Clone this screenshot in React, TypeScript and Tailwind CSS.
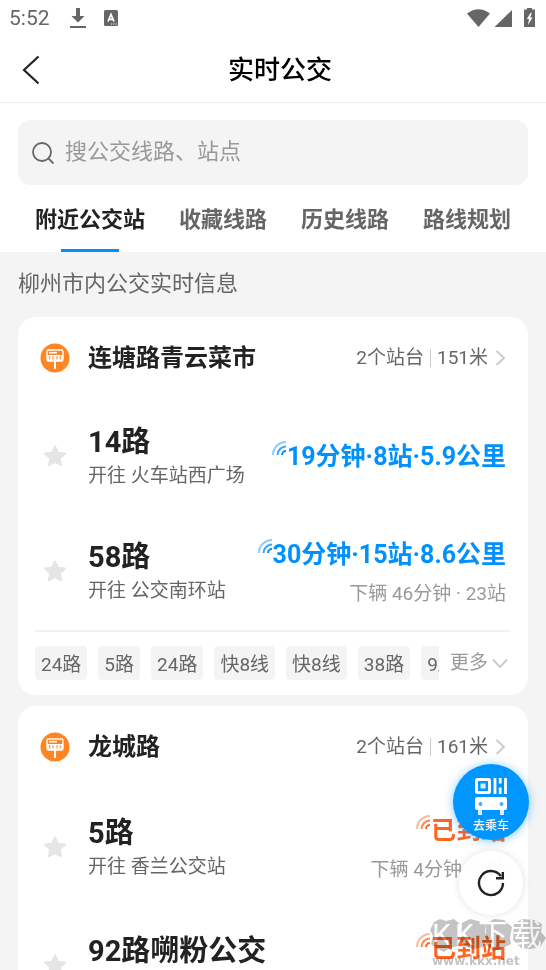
import { useState } from "react";

type Arrival = { main: string; next?: string; tone: "blue" | "orange" };
type Route = { name: string; to: string; arrival: Arrival };
type Stop = {
  name: string;
  platforms: string;
  distance: string;
  routes: Route[];
  more?: string[];
};

const tabs = ["附近公交站", "收藏线路", "历史线路", "路线规划"];

const stops: Stop[] = [
  {
    name: "连塘路青云菜市",
    platforms: "2个站台",
    distance: "151米",
    routes: [
      {
        name: "14路",
        to: "开往 火车站西广场",
        arrival: { main: "19分钟·8站·5.9公里", tone: "blue" },
      },
      {
        name: "58路",
        to: "开往 公交南环站",
        arrival: {
          main: "30分钟·15站·8.6公里",
          next: "下辆 46分钟 · 23站",
          tone: "blue",
        },
      },
    ],
    more: ["24路", "5路", "24路", "快8线", "快8线", "38路", "9路"],
  },
  {
    name: "龙城路",
    platforms: "2个站台",
    distance: "161米",
    routes: [
      {
        name: "5路",
        to: "开往 香兰公交站",
        arrival: { main: "已到站", next: "下辆 4分钟 · 1站", tone: "orange" },
      },
      {
        name: "92路嗍粉公交",
        to: "开往 火车站",
        arrival: { main: "已到站", next: "下辆 9分钟 · 4站", tone: "orange" },
      },
    ],
  },
];

function StatusBar() {
  return (
    <div className="flex h-9 items-center justify-between pl-[9px] pr-[10px] text-[#666]">
      <div className="flex items-center">
        <span className="text-[21px] leading-9">5:52</span>
        <svg className="ml-5 h-5 w-4" viewBox="0 0 16 20" fill="currentColor">
          <path d="M6 0h4v8h4.500l-6.500 6.500L1.500 8H6zM0 18h16v2H0z" />
        </svg>
        <svg className="ml-[18px] h-4 w-[14px]" viewBox="0 0 14 16">
          <rect width="14" height="16" rx="1.500" fill="currentColor" />
          <path d="M4 11.500 7 4.500l3 7M5 9.300h4" fill="none" stroke="#fff" strokeWidth="1.700" />
          <path d="M7 14h1.200M9.200 14h1.200M11.400 14h1.200" stroke="#fff" strokeWidth="1" />
        </svg>
      </div>
      <svg className="h-[20px] w-[70px]" viewBox="0 0 70 20" fill="currentColor">
        <path d="M1 5.500Q12.500-3 24 5.500L12.500 19z" />
        <path d="M28.500 19 46 2v17z" />
        <path d="M61 0h5v1.500h3V19H58V1.500h3z" />
        <path d="M64.500 5 60.800 11h2.200l-1 6 4.600-7.500h-2.400L65.800 5z" fill="#fff" />
      </svg>
    </div>
  );
}

function StopIcon() {
  return (
    <svg className="size-[30px] shrink-0" viewBox="0 0 30 30">
      <circle cx="15" cy="15" r="14.500" fill="#ff8422" />
      <rect x="7" y="7" width="16" height="11" rx="1.500" fill="none" stroke="#fff" strokeWidth="1.400" />
      <path d="M7 12h16v6H7z" fill="#fff" />
      <path d="M9 9.700h8" stroke="#fff" strokeWidth="1.600" />
      <path d="M9.700 13v3.500M13 13v3.500M17 13v3.500M20.300 13v3.500" stroke="#ff8422" strokeWidth="1" />
      <path d="M15 18v8" stroke="#fff" strokeWidth="2" />
    </svg>
  );
}

function StarIcon() {
  return (
    <svg className="size-6" viewBox="0 0 24 24">
      <path
        d="M12 2.500l2.900 6.200 7.200.9-5.300 4.700 1.300 6.900-6.100-3.100-6.100 3.100 1.300-6.900-5.300-4.700 7.200-.9z"
        fill="#e5e5e5"
        stroke="#e5e5e5"
        strokeWidth="2"
        strokeLinejoin="round"
      />
    </svg>
  );
}

function SignalIcon() {
  return (
    <svg className="mt-[5px] size-4 shrink-0" viewBox="0 0 16 16" fill="none" stroke="currentColor" strokeWidth="2">
      <path d="M2 15A13 13 0 0 1 15 2" opacity=".45" />
      <path d="M6.500 15A8.500 8.500 0 0 1 15 6.500" opacity=".8" />
      <path d="M11 15A4 4 0 0 1 15 11" />
    </svg>
  );
}

function RouteRow({ route }: { route: Route }) {
  const { main, next, tone } = route.arrival;
  return (
    <li className="flex min-h-[113px] items-center justify-between py-[19px] pl-[25px] pr-[22px]">
      <div className="flex items-center gap-[21px]">
        <button type="button" aria-label="收藏">
          <StarIcon />
        </button>
        <div className="whitespace-nowrap">
          <h3 className="text-[29px] leading-10 font-bold text-[#222]">{route.name}</h3>
          <p className="text-[19px] leading-7 text-[#666]">{route.to}</p>
        </div>
      </div>
      <div className="pt-[2px] text-right whitespace-nowrap">
        <div className={tone === "blue" ? "flex justify-end text-[#0091ff]" : "flex justify-end text-[#ff6422]"}>
          <SignalIcon />
          <span className="text-[25px] leading-[44px] font-bold">{main}</span>
        </div>
        {next && <p className="text-[19px] leading-[34px] text-[#999]">{next}</p>}
      </div>
    </li>
  );
}

function StopCard({ stop }: { stop: Stop }) {
  return (
    <section className="rounded-[18px] bg-white">
      <div className="flex h-[82px] items-center px-[22px]">
        <StopIcon />
        <h2 className="ml-[18px] flex-1 text-2xl font-bold text-[#222]">{stop.name}</h2>
        <button type="button" className="flex items-center text-[19px] text-[#666]">
          <span>{stop.platforms}</span>
          <span className="mx-[6px] h-[18px] w-px bg-[#ccc]" />
          <span>{stop.distance}</span>
          <svg className="ml-[7px] h-4 w-[11px]" viewBox="0 0 11 16" fill="none" stroke="#ccc" strokeWidth="2">
            <path d="M1.500 1 9 8l-7.500 7" />
          </svg>
        </button>
      </div>
      <ul>
        {stop.routes.map((route) => (
          <RouteRow key={route.name} route={route} />
        ))}
      </ul>
      {stop.more && (
        <div className="mx-[17px] flex items-center border-t-2 border-[#f1f1f1] pt-[14px] pb-[15px]">
          <ul className="flex min-w-0 flex-1 gap-[11px] overflow-hidden">
            {stop.more.map((name, i) => (
              <li
                key={i}
                className="shrink-0 rounded bg-[#f4f4f4] px-[6px] pt-[3px] text-[19px] leading-[31px] text-[#666]"
              >
                {name}
              </li>
            ))}
          </ul>
          <button type="button" className="ml-[11px] flex items-center gap-1 pr-[3px] text-[19px] text-[#999]">
            更多
            <svg className="h-[11px] w-4" viewBox="0 0 16 11" fill="none" stroke="#ccc" strokeWidth="2">
              <path d="M1 1.500 8 9l7-7.500" />
            </svg>
          </button>
        </div>
      )}
    </section>
  );
}

function FloatingActions() {
  return (
    <div className="absolute right-[17px] bottom-[55px] flex flex-col items-center gap-[11px]">
      <button
        type="button"
        className="flex size-[76px] flex-col items-center rounded-full bg-[#0096ff] pt-[14px] text-white shadow-[0_1px_10px_rgba(0,145,255,0.5)]"
      >
        <svg className="h-[38px] w-8" viewBox="0 0 32 38">
          <rect x="1.500" y="1.500" width="13" height="13" rx="1" fill="none" stroke="#fff" strokeWidth="3" />
          <rect x="5.500" y="5.500" width="5" height="5" fill="#fff" opacity=".85" />
          <path d="M20 0v16M30.500 0v16M25.200 0v5.500M25.200 9.500v6.500" stroke="#fff" strokeWidth="2.800" />
          <path d="M2 19h28a2 2 0 0 1 2 2v9a2 2 0 0 1-2 2H2a2 2 0 0 1-2-2v-9a2 2 0 0 1 2-2z" fill="#fff" />
          <path d="M3 32h4v5H3zM25 32h4v5h-4z" fill="#fff" opacity=".85" />
          <circle cx="5.500" cy="26" r="2" fill="#47b0ff" />
          <circle cx="26.500" cy="26" r="2" fill="#47b0ff" />
        </svg>
        <span className="text-xs leading-5 font-medium">去乘车</span>
      </button>
      <button
        type="button"
        aria-label="刷新"
        className="mr-px flex size-16 items-center justify-center rounded-full bg-white/95 shadow-[0_0_8px_rgba(0,0,0,0.12)]"
      >
        <svg className="size-7" viewBox="0 0 28 28" fill="none" stroke="#222" strokeWidth="2.400">
          <path d="M26 14A12 12 0 1 1 23.800 7.100" />
          <path d="M25.800 3V9.300H19" />
        </svg>
      </button>
    </div>
  );
}

function Watermark() {
  return (
    <div className="pointer-events-none absolute right-0 bottom-0 w-[116px] mix-blend-multiply">
      <svg className="absolute top-0 left-0 h-[34px] w-[116px]" viewBox="0 0 116 34" fill="#c4c4c4">
        <path d="M4 4 10 1 16 3 24 1 30 6 29 14 32 20 28 28 20 30 14 34 6 30 1 26 3 18 0 12z" />
        <path d="M32 5 40 1 48 3 56 6 55 14 58 21 53 29 44 31 37 29 31 24z" />
        <path d="M56 6 64 1 74 2 82 9 80 20 81 26 73 30 64 33 56 27z" />
        <path d="M84 6 92 1 104 2 112 6 111 14 116 20 110 29 100 31 91 30 83 22z" />
      </svg>
      <p className="relative flex justify-between pr-1 pl-[2px] text-[30px] leading-[34px] text-white">
        <span>K</span>
        <span>K</span>
        <span>下</span>
        <span>载</span>
      </p>
      <p className="relative pl-[2px] font-['DejaVu_Sans',sans-serif] text-xs leading-[18px] font-bold text-[#c4c4c4]">
        www.kkx.net
      </p>
    </div>
  );
}

export default function App() {
  const [active, setActive] = useState(0);

  return (
    <div className="relative flex h-screen flex-col overflow-hidden bg-[#f4f4f4] font-[Roboto,'Noto_Sans_CJK_SC',sans-serif]">
      <header className="bg-white">
        <StatusBar />
        <div className="relative flex h-[67px] items-center justify-center border-b border-[#eee] pt-[2px] pl-[14px]">
          <button type="button" aria-label="返回" className="absolute left-[22px]">
            <svg className="h-[30px] w-[18px]" viewBox="0 0 18 30" fill="none" stroke="#222" strokeWidth="2.200">
              <path d="M16.500 1.500 2 15l14.500 13.500" />
            </svg>
          </button>
          <h1 className="text-[26px] font-medium text-black">实时公交</h1>
        </div>
        <div className="px-[18px] pt-[17px]">
          <label className="flex h-[65px] items-center gap-[11px] rounded-xl bg-[#f4f4f4] pl-[14px]">
            <svg className="size-[22px]" viewBox="0 0 22 22" fill="none" stroke="#666" strokeWidth="1.800">
              <circle cx="10" cy="10" r="9" />
              <path d="m16.500 16.500 5 5" />
            </svg>
            <input
              type="text"
              aria-label="搜索"
              placeholder="搜公交线路、站点"
              className="min-w-0 flex-1 bg-transparent pb-[2px] text-[22px] outline-none placeholder:text-[#999]"
            />
          </label>
        </div>
        <nav className="flex justify-between px-[35px] pt-[6px]">
          {tabs.map((tab, i) => (
            <button
              key={tab}
              type="button"
              onClick={() => setActive(i)}
              className={
                i === active
                  ? "flex flex-col items-center text-[22px] leading-[58px] font-bold text-[#222]"
                  : "flex flex-col items-center text-[22px] leading-[58px] font-bold text-[#666]"
              }
            >
              {tab}
              {i === active && <span className="h-[3px] w-[58px] bg-[#0091ff]" />}
            </button>
          ))}
        </nav>
      </header>
      <main className="min-h-0 flex-1 overflow-y-auto px-[18px] [scrollbar-width:none]">
        <p className="pb-[2px] text-[22px] leading-[63px] text-[#666]">柳州市内公交实时信息</p>
        <div className="flex flex-col gap-[11px]">
          {stops.map((stop) => (
            <StopCard key={stop.name} stop={stop} />
          ))}
        </div>
      </main>
      <FloatingActions />
      <Watermark />
    </div>
  );
}
